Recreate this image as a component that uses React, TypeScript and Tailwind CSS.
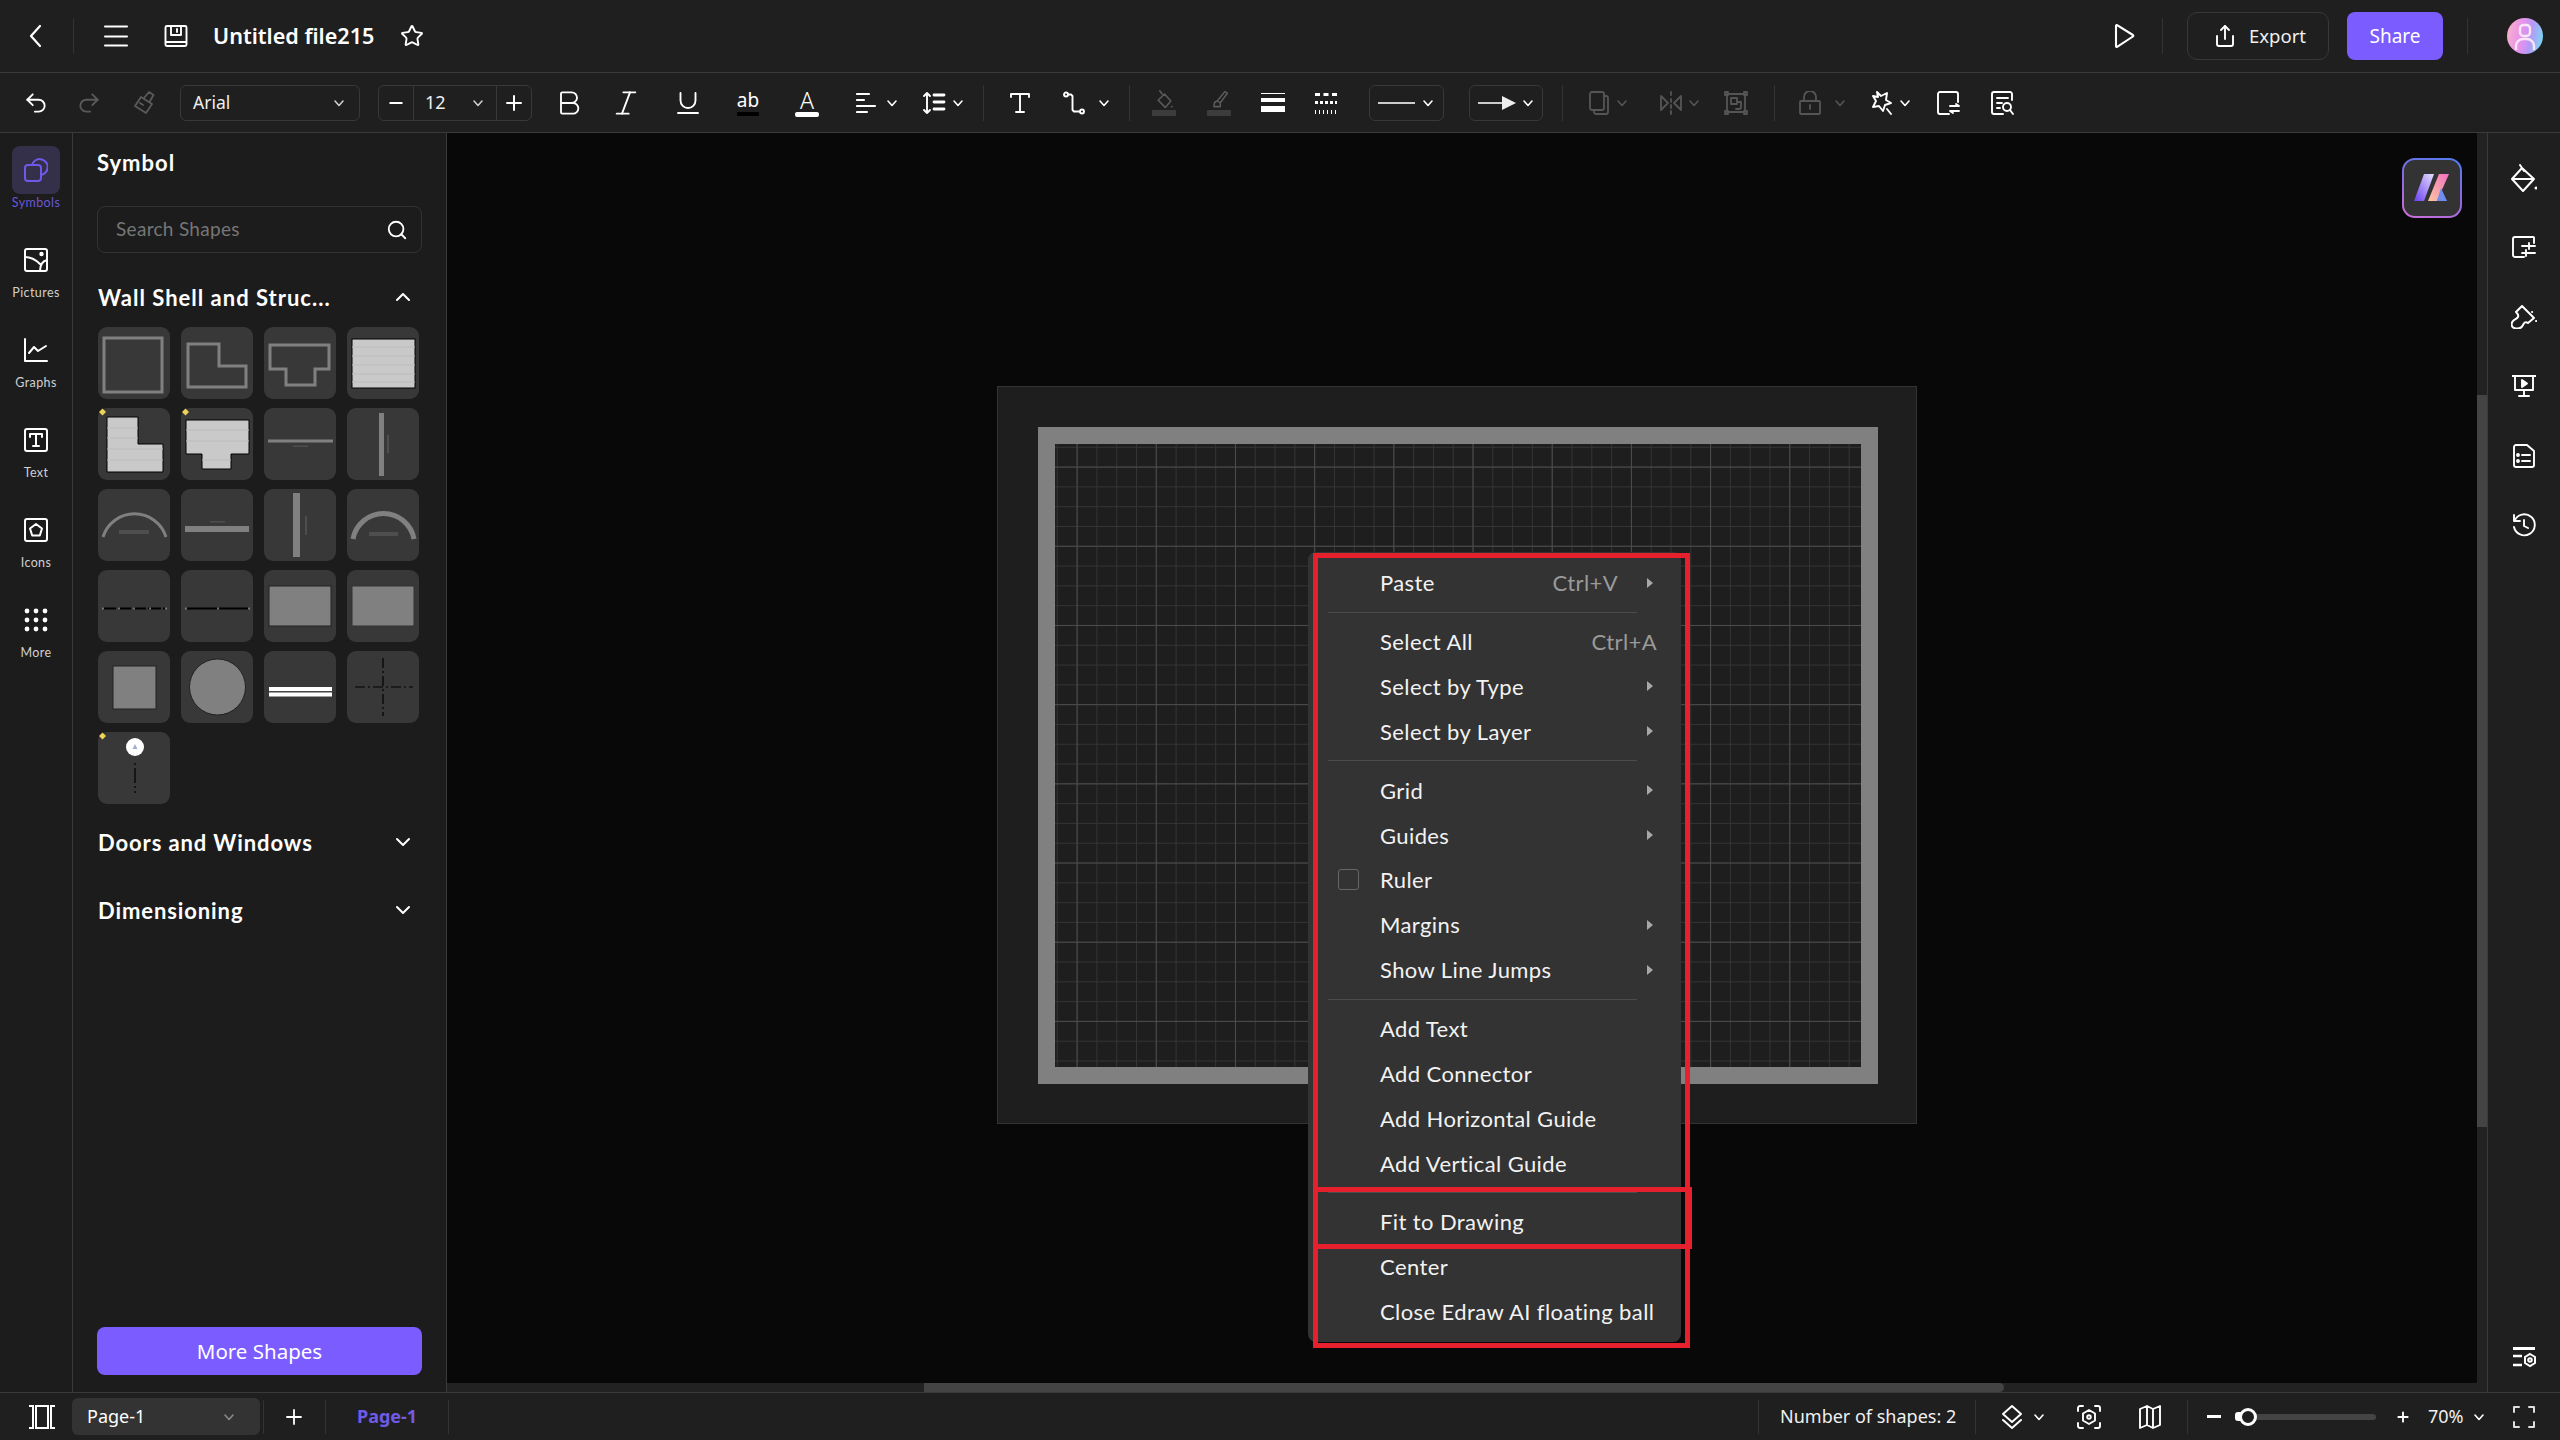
import React from "react";
import { Bold, Italic, Underline, Star, Search, ChevronUp, ChevronDown, Share, Undo2, Redo2, Plus, Minus } from "lucide-react";

const lato = "[font-family:Lato,'Noto_Sans',sans-serif]";

function Ic({ className = "", children, sw = 2 }: { className?: string; children: React.ReactNode; sw?: number }) {
  return (
    <svg viewBox="0 0 24 24" fill="none" stroke="currentColor" strokeWidth={sw} strokeLinecap="round" strokeLinejoin="round" className={`h-6 w-6 flex-none ${className}`}>
      {children}
    </svg>
  );
}

function Chev({ className = "" }: { className?: string }) {
  return (
    <svg viewBox="0 0 14 14" fill="none" stroke="currentColor" strokeWidth={1.6} strokeLinecap="round" strokeLinejoin="round" className={`h-[14px] w-[14px] flex-none ${className}`}>
      <polyline points="3,5 7,9.5 11,5" />
    </svg>
  );
}

function Divider({ className = "" }: { className?: string }) {
  return <div className={`h-9 w-px flex-none bg-[#333333] ${className}`} />;
}

function TopBar() {
  return (
    <header className="flex h-[73px] flex-none items-center border-b border-[#3a3a3a] bg-[#1f1f1f] text-white">
      <Ic className="ml-[24px]" sw={2.2}><polyline points="16,2 7,12 16,22" /></Ic>
      <Divider className="ml-[25px]" />
      <Ic className="ml-[30px]"><path d="M1 2.5h22M1 12.5h22M1 21.5h22" /></Ic>
      <Ic className="ml-[36px]" sw={1.9}>
        <path d="M3 2h18a1.5 1.5 0 0 1 1.5 1.5v17A1.5 1.5 0 0 1 21 22H3a1.5 1.5 0 0 1-1.5-1.5v-17A1.5 1.5 0 0 1 3 2z" />
        <path d="M7 2v9h10V2M13 5v3M2 18h20" />
      </Ic>
      <span className="ml-[25px] w-[162px] whitespace-nowrap text-[21.600px] font-semibold [font-family:'Noto_Sans',sans-serif]">Untitled file215</span>
      <Star className="ml-[25px] h-6 w-6 flex-none" strokeWidth={1.9} />
      <Ic className="ml-auto" sw={2.1}><path d="M3 1.8c0-.6.6-1 1.100-.6l15.800 9.800c.6.4.6 1.100 0 1.500L4.100 22.800c-.5.3-1.100 0-1.100-.6z" /></Ic>
      <Divider className="ml-[25px]" />
      <button className="ml-[24px] flex h-[48px] w-[142px] flex-none items-center rounded-[10px] border border-[#383838] pl-[25px] text-[18.500px] [font-family:'Noto_Sans',sans-serif]">
        <Share className="h-6 w-6 flex-none" strokeWidth={1.9} />
        <span className="ml-[12px] text-[#f0f0f0]">Export</span>
      </button>
      <button className="ml-[18px] h-[48px] w-[96px] flex-none rounded-[8px] bg-[#7b5cff] text-[19px] [font-family:'Noto_Sans',sans-serif]">Share</button>
      <Divider className="ml-[24px]" />
      <div className="ml-[39px] mr-[17px] flex h-9 w-9 flex-none items-end justify-center overflow-hidden rounded-full bg-[linear-gradient(100deg,#f7b7c4_0%,#e990ee_40%,#b29bf5_65%,#6fe4f7_100%)]">
        <svg viewBox="0 0 36 36" className="h-9 w-9" fill="none" stroke="#f8e6f5" strokeWidth={2.4}>
          <rect x="13" y="7" width="10" height="11" rx="3.500" />
          <path d="M9 32v-4a7 7 0 0 1 7-7h4a7 7 0 0 1 7 7v4" />
        </svg>
      </div>
    </header>
  );
}

function Toolbar() {
  return (
    <div className="flex h-[60px] flex-none items-center border-b border-[#3a3a3a] bg-[#1f1f1f] text-white">
      <Undo2 className="ml-[23px] h-[26px] w-[26px] flex-none" strokeWidth={1.7} />
      <Redo2 className="ml-[27px] h-[26px] w-[26px] flex-none text-[#5a5a5a]" strokeWidth={1.7} />
      <Ic className="ml-[30px] text-[#5a5a5a]" sw={1.8}>
        <path d="M12 7l5-6 4.500 3-4 7M9 6l11 7-6 9-11-7zM8 12l3 2" />
      </Ic>
      <div className="ml-[24px] flex h-[36px] w-[180px] flex-none items-center justify-between rounded-[6px] border border-[#383838] pl-[12px] pr-[13px] text-[17.500px] [font-family:'Noto_Sans',sans-serif]">
        <span className="text-[#eeeeee]">Arial</span>
        <Chev className="text-[#cccccc]" />
      </div>
      <div className="ml-[18px] flex h-[36px] w-[154px] flex-none rounded-[6px] border border-[#383838]">
        <div className="flex w-[34px] flex-none items-center justify-center"><Minus className="h-5 w-5" strokeWidth={2.2} /></div>
        <div className="flex flex-1 items-center justify-between border-x border-[#383838] px-[11px] text-[18px] [font-family:'Noto_Sans',sans-serif]">
          <span className="text-[#eeeeee]">12</span>
          <Chev className="text-[#cccccc]" />
        </div>
        <div className="flex w-[34px] flex-none items-center justify-center"><Plus className="h-6 w-6" strokeWidth={2} /></div>
      </div>
      <Bold className="ml-[21px] h-[32px] w-[32px] flex-none" strokeWidth={1.4} />
      <Italic className="ml-[25px] h-[32px] w-[32px] flex-none" strokeWidth={1.4} />
      <Underline className="ml-[31px] h-[30px] w-[30px] flex-none" strokeWidth={1.5} />
      <div className="ml-[30px] flex w-[30px] flex-none flex-col items-center">
        <span className="text-[19px] leading-[20px] [font-family:'Noto_Sans',sans-serif]">ab</span>
        <div className="mt-[2px] h-[4px] w-[22px] rounded-[1px] bg-black" />
      </div>
      <div className="ml-[32px] flex w-[24px] flex-none flex-col items-center">
        <span className="text-[23px] font-light leading-[22px] [font-family:'Noto_Sans',sans-serif]">A</span>
        <div className="mt-[1px] h-[5px] w-[24px] rounded-[2px] bg-white" />
      </div>
      <Ic className="ml-[37px]" sw={2.1}><path d="M1 3h12M1 9h7M1 15h18M1 21h10" /></Ic>
      <Chev className="ml-[5px]" />
      <Ic className="ml-[23px]" sw={1.9}>
        <path d="M12 4h10M12 11h10M12 18h10" strokeWidth={2.8} />
        <path d="M5 2v20M2 5l3-3 3 3M2 19l3 3 3-3" />
      </Ic>
      <Chev className="ml-[5px]" />
      <Divider className="ml-[18px]" />
      <Ic className="ml-[24px]" sw={1.9}><path d="M3 6V3h18v3M12 3v18M8 21h8" /></Ic>
      <Ic className="ml-[30px]" sw={1.9}>
        <circle cx="4" cy="3.500" r="2" /><circle cx="20" cy="20.500" r="2" /><path d="M6 3.500h3l1.500 1.500v14l1.500 1.500h6" />
      </Ic>
      <Chev className="ml-[11px]" />
      <Divider className="ml-[18px]" />
      <div className="ml-[22px] flex w-6 flex-none flex-col items-center text-[#5a5a5a]">
        <Ic className="h-[19px] w-[19px]" sw={2}><path d="M6 1l3 4M12 5l8 9-7 8-9-9zM21 21h.5" /></Ic>
        <div className="mt-[1px] h-[6px] w-[24px] rounded-[1px] bg-[#3c3c3c]" />
      </div>
      <div className="ml-[31px] flex w-6 flex-none flex-col items-center text-[#5a5a5a]">
        <Ic className="h-[19px] w-[19px]" sw={2}><path d="M19 2l3 2-9 12-4-2zM9 14c-3 0-4 3-4 7h8v-5" /></Ic>
        <div className="mt-[1px] h-[6px] w-[24px] rounded-[1px] bg-[#3c3c3c]" />
      </div>
      <div className="ml-[30px] flex w-6 flex-none flex-col gap-[4px]">
        <div className="h-[1px] bg-white" />
        <div className="h-[4px] bg-white" />
        <div className="h-[6px] bg-white" />
      </div>
      <svg viewBox="0 0 24 24" className="ml-[29px] h-6 w-6 flex-none" fill="#ffffff">
        <path d="M1 2h5v3H1zM9.500 2h5v3h-5zM18 2h5v3h-5z" />
        <path d="M1 10h3v3H1zM6 10h3v3H6zM11 10h3v3h-3zM16 10h3v3h-3zM21 10h2v3h-2z" />
        <path d="M1 19h1v4H1zM5 19h1v4H5zM9 19h1v4H9zM13 19h1v4h-1zM17 19h1v4h-1zM21 19h1v4h-1z" />
      </svg>
      <div className="ml-[31px] flex h-[36px] w-[75px] flex-none items-center rounded-[6px] border border-[#383838] pl-[8px]">
        <div className="h-[2px] w-[37px] bg-[#cccccc]" />
        <Chev className="ml-[6px]" />
      </div>
      <div className="ml-[25px] flex h-[36px] w-[74px] flex-none items-center rounded-[6px] border border-[#383838] pl-[8px]">
        <svg viewBox="0 0 38 16" className="h-4 w-[38px] flex-none"><path d="M0 7h24v2H0z" fill="#cccccc" /><path d="M24 1l14 7-14 7z" fill="#eeeeee" /></svg>
        <Chev className="ml-[5px]" />
      </div>
      <Divider className="ml-[19px]" />
      <Ic className="ml-[24px] text-[#555555]" sw={1.8}><rect x="3" y="1" width="14" height="18" rx="2" /><path d="M17 5h2a2 2 0 0 1 2 2v14a2 2 0 0 1-2 2H9a2 2 0 0 1-2-2v-2" /></Ic>
      <Chev className="ml-[4px] text-[#555555]" />
      <Ic className="ml-[30px] text-[#555555]" sw={1.8}><path d="M12 1v3M12 8v3M12 14v3M12 20v3M2 5l7 7-7 7zM22 5l-7 7 7 7z" /></Ic>
      <Chev className="ml-[4px] text-[#555555]" />
      <Ic className="ml-[23px] text-[#555555]" sw={1.8}><rect x="3" y="3" width="18" height="18" /><rect x="1" y="1" width="3" height="3" /><rect x="20" y="1" width="3" height="3" /><rect x="1" y="20" width="3" height="3" /><rect x="20" y="20" width="3" height="3" /><path d="M7 7h6v6H7zM14 11h3v5a2 2 0 0 1-2 2h-3" /></Ic>
      <Divider className="ml-[26px]" />
      <Ic className="ml-[23px] text-[#555555]" sw={1.8}><rect x="2" y="10" width="20" height="13" rx="1" /><path d="M6 10V6a6 6 0 0 1 12 0v4M12 14v4" /></Ic>
      <Chev className="ml-[11px] text-[#555555]" />
      <Ic className="ml-[23px]" sw={1.9}><path d="M7 1l4 4 6-3-1 7 5 3-6 2-2 6-4-5-6 1 3-6-3-5 5 1zM17 18l4 5" /></Ic>
      <Chev className="ml-[4px]" />
      <Ic className="ml-[24px]" sw={1.9}><path d="M13 23H4a2 2 0 0 1-2-2V3a2 2 0 0 1 2-2h16a2 2 0 0 1 2 2v8M14 15h9l-3-2M23 20h-9l3 2" /></Ic>
      <Ic className="ml-[30px]" sw={1.9}><path d="M22 9V3a2 2 0 0 0-2-2H4a2 2 0 0 0-2 2v18a2 2 0 0 0 2 2h9M7 7h11M7 12h5M7 17h3" /><circle cx="17" cy="16" r="4" /><path d="M20 19l3 4" /></Ic>
    </div>
  );
}

const navItems: { label: string; icon: React.ReactNode }[] = [
  {
    label: "Pictures",
    icon: <Ic sw={2}><rect x="1" y="1" width="22" height="22" rx="2" /><path d="M1 9c6 0 12 4 15 7M23 12c-4 1-7 5-7 11" /><circle cx="17.500" cy="6" r="1.200" fill="currentColor" /></Ic>,
  },
  {
    label: "Graphs",
    icon: <Ic sw={2}><path d="M1 1v22h22M5 15l5-6 4 4 8-5" /></Ic>,
  },
  {
    label: "Text",
    icon: <Ic sw={2}><rect x="1" y="1" width="22" height="22" rx="2" /><path d="M6 9V6h12v3M12 6v12M9 18h6" /></Ic>,
  },
  {
    label: "Icons",
    icon: <Ic sw={2}><rect x="1" y="1" width="22" height="22" rx="2" /><path d="M12 6l6 4.500-2.200 7H8.200L6 10.500z" /></Ic>,
  },
  {
    label: "More",
    icon: (
      <svg viewBox="0 0 24 24" className="h-6 w-6" fill="#ffffff">
        {[3, 12, 21].map((y) => [3, 12, 21].map((x) => <circle key={`${x}-${y}`} cx={x} cy={y} r={2.400} />))}
      </svg>
    ),
  },
];

function LeftNav() {
  return (
    <nav className={`flex w-[73px] flex-none flex-col items-center gap-[24px] border-r border-[#3a3a3a] bg-[#1c1c1c] pt-[13px] text-[12.500px] tracking-[0.4px] ${lato}`}>
      <div className="flex flex-col items-center">
        <div className="flex h-12 w-12 items-center justify-center rounded-[8px] bg-[#35304a] text-[#7058e8]">
          <Ic sw={2}><rect x="1" y="7" width="16" height="16" rx="3" /><path d="M8 7a8 8 0 1 1 9 10" /></Ic>
        </div>
        <span className="h-[18px] leading-[18px] text-[#6a58d8]">Symbols</span>
      </div>
      {navItems.map((item) => (
        <div key={item.label} className="flex flex-col items-center">
          <div className="flex h-12 w-12 items-center justify-center text-white">{item.icon}</div>
          <span className="h-[18px] leading-[18px] text-[#d0d0d0]">{item.label}</span>
        </div>
      ))}
    </nav>
  );
}

const wall = "#808080";
const faint = "#4e4e4e";
const light = "#c9c9c9";

function Diamond() {
  return <path d="M4.500 0.500l3.500 3.500-3.500 3.500-3.500-3.500z" fill="#eed25a" />;
}

const thumbs: React.ReactNode[] = [
  <rect x="6" y="11" width="58" height="54" fill="none" stroke={wall} strokeWidth="3" />,
  <path d="M7 17h31v22h27v21H7z" fill="none" stroke={wall} strokeWidth="3" />,
  <path d="M6 18h59v24H51v16H22V42H6z" fill="none" stroke={wall} strokeWidth="3" />,
  <g>
    <rect x="5" y="12" width="63" height="49" fill={light} stroke="#000000" />
    <path d="M5 20h63M5 29h63M5 38h63M5 47h63M5 55h63" stroke="#bcbcbc" />
  </g>,
  <g>
    <Diamond />
    <path d="M9 9h31v27h25v28H9z" fill={light} stroke="#000000" />
    <path d="M9 20h31M9 30h31M9 41h56M9 52h56" stroke="#bcbcbc" />
  </g>,
  <g>
    <Diamond />
    <path d="M5 12h63v34H50v15H21V46H5z" fill={light} stroke="#000000" />
    <path d="M5 22h63M5 33h63M21 52h29" stroke="#bcbcbc" />
  </g>,
  <g>
    <rect x="4" y="31.500" width="65" height="3" fill={wall} />
    <rect x="29" y="37.500" width="15" height="1.500" fill={faint} />
  </g>,
  <g>
    <rect x="32" y="5" width="5" height="63" fill={wall} />
    <rect x="40" y="27" width="2" height="18" fill={faint} />
  </g>,
  <g>
    <path d="M5 48A33 33 0 0 1 68 48" fill="none" stroke={wall} strokeWidth="3" />
    <rect x="21" y="41" width="30" height="4" fill={faint} />
  </g>,
  <g>
    <rect x="4" y="37" width="64" height="6" fill={wall} />
    <rect x="29" y="32" width="15" height="1.500" fill={faint} />
  </g>,
  <g>
    <rect x="29" y="4" width="7" height="64" fill={wall} />
    <rect x="41" y="27" width="2" height="19" fill={faint} />
  </g>,
  <g>
    <path d="M6 50A31 31 0 0 1 67 50" fill="none" stroke={wall} strokeWidth="5" />
    <rect x="22" y="43" width="29" height="4" fill={faint} />
  </g>,
  <g>
    <path d="M5 38.500h63" stroke="#000000" strokeWidth="2" strokeDasharray="13 2" />
    <path d="M5 37.500v2M21 37.500v2M36 37.500v2M52 37.500v2M68 37.500v2" stroke="#999999" strokeWidth="1.500" />
  </g>,
  <g>
    <path d="M5 38.500h63" stroke="#000000" strokeWidth="2" />
    <path d="M5 37.500v2M37 37.500v2M68 37.500v2" stroke="#999999" strokeWidth="1.500" />
  </g>,
  <rect x="5" y="16" width="62" height="40" fill={wall} stroke="#222222" />,
  <rect x="5" y="16" width="62" height="40" fill={wall} stroke="#333333" />,
  <rect x="15" y="15" width="43" height="43" fill={wall} stroke="#222222" />,
  <circle cx="36.500" cy="36" r="28" fill={wall} stroke="#222222" />,
  <g>
    <rect x="5" y="36" width="63" height="9.500" fill="#ffffff" />
    <rect x="5" y="40" width="63" height="1.500" fill="#444444" />
  </g>,
  <path d="M8 36h58M36 7v58" stroke="#000000" strokeWidth="1.200" strokeDasharray="10 3 2 3" />,
  <g>
    <Diamond />
    <circle cx="37" cy="15" r="9" fill="#ffffff" />
    <path d="M37 12l2.500 5h-5z" fill="#9fb2cc" />
    <path d="M37 31v32" stroke="#000000" strokeWidth="1.200" strokeDasharray="2 3 15 3 2 3" />
  </g>,
];

function SymbolPanel() {
  return (
    <aside className={`flex w-[374px] flex-none flex-col border-r border-[#3a3a3a] bg-[#1c1c1c] pb-[17px] pl-[24px] text-white ${lato}`}>
      <h2 className="mt-[16px] h-[28px] text-[22px] font-bold leading-[28px] tracking-[1px]">Symbol</h2>
      <div className="mt-[29px] flex h-[47px] w-[325px] flex-none items-center justify-between rounded-[8px] border border-[#333333] pl-[18px] pr-[13px]">
        <span className="text-[19px] tracking-[0.3px] text-[#767676]">Search Shapes</span>
        <Search className="h-[22px] w-[22px] text-white" strokeWidth={2} />
      </div>
      <div className="mt-[29px] flex h-[30px] w-[325px] flex-none items-center justify-between pl-[1px] pr-[7px]">
        <span className="text-[22px] font-bold tracking-[1px]">Wall Shell and Struc...</span>
        <ChevronUp className="h-6 w-6" strokeWidth={2} />
      </div>
      <div className="ml-[1px] mt-[15px] grid grid-cols-[repeat(4,72px)] gap-x-[11px] gap-y-[9px]">
        {thumbs.map((t, i) => (
          <div key={i} className="h-[72px] w-[72px] rounded-[9px] bg-[#383838]">
            <svg viewBox="0 0 72 72" className="h-[72px] w-[72px] overflow-visible">{t}</svg>
          </div>
        ))}
      </div>
      <div className="mt-[23px] flex h-[30px] w-[325px] flex-none items-center justify-between pl-[1px] pr-[7px]">
        <span className="text-[22px] font-bold tracking-[0.9px]">Doors and Windows</span>
        <ChevronDown className="h-6 w-6" strokeWidth={2} />
      </div>
      <div className="mt-[38px] flex h-[30px] w-[325px] flex-none items-center justify-between pl-[1px] pr-[7px]">
        <span className="text-[22px] font-bold tracking-[0.9px]">Dimensioning</span>
        <ChevronDown className="h-6 w-6" strokeWidth={2} />
      </div>
      <button className="mt-auto h-[48px] w-[325px] flex-none rounded-[8px] bg-[#7b5cff] text-[20.500px] [font-family:'Noto_Sans',sans-serif]">More Shapes</button>
    </aside>
  );
}

type MenuRow = { label: string; shortcut?: string; arrow?: boolean; check?: boolean } | "sep";

const menuRows: MenuRow[] = [
  { label: "Paste", shortcut: "Ctrl+V", arrow: true },
  "sep",
  { label: "Select All", shortcut: "Ctrl+A" },
  { label: "Select by Type", arrow: true },
  { label: "Select by Layer", arrow: true },
  "sep",
  { label: "Grid", arrow: true },
  { label: "Guides", arrow: true },
  { label: "Ruler", check: true },
  { label: "Margins", arrow: true },
  { label: "Show Line Jumps", arrow: true },
  "sep",
  { label: "Add Text" },
  { label: "Add Connector" },
  { label: "Add Horizontal Guide" },
  { label: "Add Vertical Guide" },
  "sep",
  { label: "Fit to Drawing" },
  { label: "Center" },
  { label: "Close Edraw AI floating ball" },
];

function ContextMenu() {
  return (
    <div className={`absolute left-[861px] top-[419px] w-[373px] rounded-[8px] bg-[#333333] pb-[8px] pt-[8.300px] text-[22px] tracking-[0.4px] text-[#f2f2f2] ${lato}`}>
      {menuRows.map((row, i) =>
        row === "sep" ? (
          <div key={i} className="flex h-[14px] items-center pl-[20px]">
            <div className="h-px w-[309px] bg-[#4c4c4c]" />
          </div>
        ) : (
          <div key={row.label} className="flex h-[44.870px] items-center pl-[30px] pr-[24px]">
            <div className="w-[42px] flex-none">
              {row.check && <div className="h-[21px] w-[21px] rounded-[3px] border border-[#666666]" />}
            </div>
            <span className="whitespace-nowrap">{row.label}</span>
            {row.shortcut && <span className="ml-auto text-[#9a9a9a]">{row.shortcut}</span>}
            {row.arrow && (
              <div className={`mr-[4px] h-0 w-0 border-y-[5px] border-l-[6px] border-y-transparent border-l-[#a8a8a8] ${row.shortcut ? "ml-[29px]" : "ml-auto"}`} />
            )}
          </div>
        ),
      )}
      <div className="pointer-events-none absolute left-[5px] top-[1px] h-[795px] w-[377px] border-[5px] border-[#e6212d]" />
      <div className="pointer-events-none absolute left-[5px] top-[635px] h-[62px] w-[379px] border-[5px] border-[#e6212d]" />
    </div>
  );
}

function Canvas() {
  return (
    <div className="flex min-w-0 flex-1 flex-col">
      <div className="flex min-h-0 flex-1">
        <div className="relative min-w-0 flex-1 overflow-hidden bg-[#080808]">
          <div className="absolute left-[550px] top-[253px] h-[738px] w-[920px] border border-[#333333] bg-[#1e1e1e] p-[40px]">
            <div className="h-[657px] w-[840px] border-[17px] border-[#808080] bg-[#1e1e1e] bg-[linear-gradient(90deg,#4c4c4c_1px,transparent_1px),linear-gradient(#4c4c4c_1px,transparent_1px),linear-gradient(90deg,#343434_1px,transparent_1px),linear-gradient(#343434_1px,transparent_1px)] bg-[size:79.200px_79.200px,79.200px_79.200px,19.800px_19.800px,19.800px_19.800px] bg-[position:21.600px_0,0_22.600px,1.800px_0,0_2.800px]" />
          </div>
          <div className="absolute left-[1955px] top-[25px] flex h-[60px] w-[60px] items-center justify-center rounded-[13px] bg-[linear-gradient(200deg,#4f7df0_0%,#8a68e0_50%,#d070d8_100%)] p-[2px]">
            <div className="flex h-full w-full items-center justify-center rounded-[11px] bg-[#333333]">
              <svg viewBox="0 0 36 28" className="h-[28px] w-[36px]">
                <defs>
                  <linearGradient id="ai-left" x1="0" y1="1" x2="1" y2="0">
                    <stop offset="0" stopColor="#6a3ff0" />
                    <stop offset="1" stopColor="#e6e0ff" />
                  </linearGradient>
                  <linearGradient id="ai-right" x1="0" y1="1" x2="1" y2="0">
                    <stop offset="0" stopColor="#fbc7a0" />
                    <stop offset="1" stopColor="#f26fc0" />
                  </linearGradient>
                </defs>
                <path d="M10 0h10L10 27H0z" fill="url(#ai-left)" />
                <path d="M25 0h10L23 27H14z" fill="url(#ai-right)" />
                <path d="M27 14l6 13H23z" fill="#6f8df0" />
              </svg>
            </div>
          </div>
          <ContextMenu />
        </div>
        <div className="w-[10px] flex-none bg-[#222222] pt-[262px]">
          <div className="h-[732px] bg-[#444444]" />
        </div>
      </div>
      <div className="h-[9px] flex-none bg-[#222222] pl-[477px]">
        <div className="h-[9px] w-[1080px] rounded-r-[5px] bg-[#444444]" />
      </div>
    </div>
  );
}

function RightRail() {
  const slot = "flex h-[69.500px] flex-none items-center justify-center";
  return (
    <aside className="flex w-[73px] flex-none flex-col border-l border-[#3a3a3a] bg-[#1f1f1f] pb-[22px] pt-[10px] text-white">
      <div className={slot}>
        <svg viewBox="0 0 26 28" className="h-[28px] w-[26px]" fill="none" stroke="currentColor" strokeWidth={2} strokeLinecap="round" strokeLinejoin="round">
          <path d="M9 1l4 6M11 4L1 15l11 12 11-12zM2 15h21" />
          <circle cx="25" cy="24" r="1.500" fill="currentColor" stroke="none" />
        </svg>
      </div>
      <div className={slot}><Ic sw={1.9}><path d="M12 22H3a2 2 0 0 1-2-2V4a2 2 0 0 1 2-2h18a2 2 0 0 1 1 .5V8M10 11h13M10 18h13M17 8v6M14 15v6" /></Ic></div>
      <div className={slot}>
        <svg viewBox="0 0 26 24" className="h-[24px] w-[26px]" fill="none" stroke="currentColor" strokeWidth={2} strokeLinecap="round" strokeLinejoin="round">
          <path d="M11 1l12 12-6 5c-3-2-4 0-5 2-2 4-6 4-9 3-3-1-3-5-1-7 2-2 4-2 5-4 1-2-1-4-2-5z" />
          <path d="M21 7h.2M25 16h.2" />
        </svg>
      </div>
      <div className={slot}><Ic sw={1.9}><path d="M0 2h24M3 2v14h18V2M12 16v6M7 22h10" /><path d="M10 6l5 3.500-5 3.500z" fill="currentColor" /></Ic></div>
      <div className={slot}><Ic sw={1.9}><path d="M4 1h11l7 6v14a2 2 0 0 1-2 2H4a2 2 0 0 1-2-2V3a2 2 0 0 1 2-2zM10 11h8M10 17h8" /><circle cx="6" cy="11" r="1" fill="currentColor" /><circle cx="6" cy="17" r="1" fill="currentColor" /></Ic></div>
      <div className={slot}><Ic sw={1.9}><path d="M2 2v6h6M2.500 8A10.500 10.500 0 1 1 2 14M12 7v6l4 2" /></Ic></div>
      <div className="mt-auto flex justify-center">
        <svg viewBox="0 0 24 24" className="h-6 w-6" fill="none" stroke="#ffffff" strokeWidth={2}>
          <path d="M1 2.500h22" strokeWidth={3} />
          <path d="M1 10h9M1 19h9" strokeWidth={2.500} />
          <path d="M18 8l5 3v6l-5 3-5-3v-6z" />
          <circle cx="18" cy="14" r="1.800" />
        </svg>
      </div>
    </aside>
  );
}

function BottomBar() {
  const noto = "[font-family:'Noto_Sans',sans-serif]";
  return (
    <footer className={`flex h-[48px] flex-none items-center border-t border-[#3a3a3a] bg-[#1f1f1f] pr-[24px] text-white ${noto}`}>
      <svg viewBox="0 0 26 26" className="ml-[29px] h-[26px] w-[26px] flex-none" fill="none" stroke="#ffffff" strokeWidth={2}>
        <rect x="7" y="2" width="12" height="22" />
        <path d="M0 2h4v22H0M26 2h-4v22h4" />
      </svg>
      <div className="ml-[17px] flex h-[37px] w-[188px] flex-none items-center justify-between rounded-[6px] bg-[#333333] pl-[15px] pr-[24px] text-[18px]">
        <span>Page-1</span>
        <Chev className="text-[#888888]" />
      </div>
      <div className="ml-[3px] h-[34px] w-px flex-none bg-[#333333]" />
      <Plus className="ml-[18px] h-6 w-6 flex-none" strokeWidth={1.8} />
      <div className="ml-[19px] h-[34px] w-px flex-none bg-[#333333]" />
      <span className="ml-[31px] w-[60px] whitespace-nowrap text-[18px] font-bold text-[#6f5be6]">Page-1</span>
      <div className="ml-[31px] h-[34px] w-px flex-none bg-[#333333]" />

      <div className="ml-auto h-[34px] w-px flex-none bg-[#333333]" />
      <span className="ml-[21px] w-[177px] whitespace-nowrap text-[18px] text-[#f0f0f0]">Number of shapes: 2</span>
      <div className="ml-[18px] h-[34px] w-px flex-none bg-[#333333]" />
      <Ic className="ml-[24px]" sw={1.9}><path d="M12 1l9 8-9 8-9-8zM3 15l9 8 9-8" /></Ic>
      <Chev className="ml-[8px]" />
      <Ic className="ml-[31px]" sw={1.9}><path d="M1 6V3a2 2 0 0 1 2-2h3M18 1h3a2 2 0 0 1 2 2v3M23 18v3a2 2 0 0 1-2 2h-3M6 23H3a2 2 0 0 1-2-2v-3" /><path d="M12 5l6 3.500v7L12 19l-6-3.500v-7z" /><circle cx="12" cy="12" r="1.800" /></Ic>
      <Ic className="ml-[37px]" sw={1.9}><path d="M2 4l7-3 6 3 7-3v19l-7 3-6-3-7 3zM9 1v19M15 4v19" /></Ic>
      <div className="ml-[25px] h-[34px] w-px flex-none bg-[#333333]" />
      <div className="ml-[19px] h-[3px] w-[14px] flex-none bg-white" />
      <div className="relative ml-[14px] h-[6px] w-[141px] flex-none rounded-full bg-[#444444]">
        <div className="absolute left-[0px] top-[-1.500px] h-[9px] w-[6px] rounded-l-[3px] bg-white" />
        <div className="absolute left-[4px] top-[-6px] h-[18px] w-[18px] rounded-full border-[3.500px] border-white bg-[#1f1f1f]" />
      </div>
      <Plus className="ml-[19px] h-4 w-4 flex-none" strokeWidth={2.800} />
      <span className="ml-[17px] w-[37px] whitespace-nowrap text-[18px] text-[#f0f0f0]">70%</span>
      <Chev className="ml-[7px]" />
      <Ic className="ml-[26px] text-[#dddddd]" sw={2}><path d="M2 7V2h5M17 2h5v5M22 17v5h-5M7 22H2v-5" /></Ic>
    </footer>
  );
}

export default function App() {
  return (
    <div className="flex h-[1440px] w-[2560px] flex-col overflow-hidden bg-[#1f1f1f]">
      <TopBar />
      <Toolbar />
      <main className="flex min-h-0 flex-1">
        <LeftNav />
        <SymbolPanel />
        <Canvas />
        <RightRail />
      </main>
      <BottomBar />
    </div>
  );
}
